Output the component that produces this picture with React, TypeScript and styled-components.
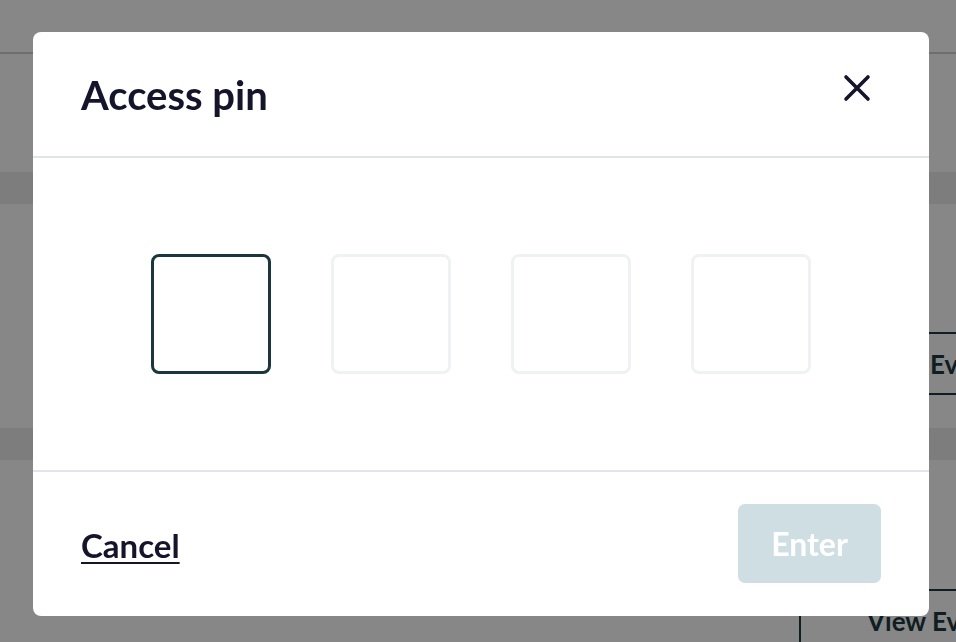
import React from "react";
import styled, { createGlobalStyle } from "styled-components";

const Global = createGlobalStyle`
  html, body { margin: 0; padding: 0; }
  body {
    width: 956px;
    height: 642px;
    overflow: hidden;
    background: #ffffff;
    font-family: Lato, "Noto Sans", sans-serif;
  }
`;

const Page = styled.div`
  width: 956px;
  height: 642px;
  overflow: hidden;
  background: #ffffff;
  display: flex;
  flex-direction: column;
`;

const TopBar = styled.div`
  height: 52px;
  flex: none;
  border-bottom: 2px solid #d0d0d0;
`;

const Spacer = styled.div<{ $h: number }>`
  height: ${(p) => p.$h}px;
  flex: none;
`;

const Band = styled.div`
  height: 32px;
  flex: none;
  background: #ececec;
`;

const EventRow = styled.div<{ $pad: number; $h: number }>`
  height: ${(p) => p.$h}px;
  flex: none;
  display: grid;
  grid-template-columns: 799px auto;
  align-items: start;
  padding-top: ${(p) => p.$pad}px;
  box-sizing: border-box;
`;

const GhostButton = styled.div<{ $left?: boolean }>`
  grid-column: 2;
  height: 63px;
  box-sizing: border-box;
  border-top: 2px solid #1b3a40;
  border-bottom: 2px solid #1b3a40;
  border-left: ${(p) => (p.$left ? "2px solid #1b3a40" : "none")};
  display: flex;
  align-items: center;
  padding-left: 66px;
  white-space: nowrap;
  font-size: 26px;
  font-weight: 700;
  color: #1b3a40;
`;

const Overlay = styled.div`
  position: fixed;
  inset: 0;
  background: rgba(0, 0, 0, 0.47);
  display: flex;
  align-items: flex-start;
  justify-content: flex-start;
  padding: 32px 0 0 33px;
  box-sizing: border-box;
`;

const Modal = styled.div`
  width: 896px;
  height: 584px;
  background: #ffffff;
  border-radius: 8px;
  display: flex;
  flex-direction: column;
  overflow: hidden;
`;

const Header = styled.div`
  height: 124px;
  flex: none;
  display: flex;
  align-items: center;
  justify-content: space-between;
  padding: 0 48px;
  border-bottom: 2px solid #e3e3eb;
  box-sizing: content-box;
`;

const Title = styled.h2`
  margin: 0;
  font-family: Lato, "Noto Sans", sans-serif;
  font-weight: 700;
  font-size: 40px;
  line-height: 1;
  color: #14142b;
  padding-top: 2px;
`;

const CloseButton = styled.button`
  border: none;
  background: none;
  padding: 0;
  width: 32px;
  height: 32px;
  display: flex;
  align-items: center;
  justify-content: center;
  margin-right: 8px;
  margin-top: -12px;
  cursor: pointer;
  color: #14142b;
`;

const Body = styled.div`
  height: 312px;
  flex: none;
  display: flex;
  align-items: center;
  justify-content: center;
  gap: 60px;
  border-bottom: 2px solid #e3e3eb;
  box-sizing: content-box;
`;

const PinBox = styled.div<{ $active?: boolean }>`
  width: 120px;
  height: 120px;
  box-sizing: border-box;
  border-radius: 8px;
  border: 3px solid ${(p) => (p.$active ? "#1b363d" : "#f0f1f3")};
  background: #ffffff;
`;

const Footer = styled.div`
  flex: 1;
  display: flex;
  align-items: center;
  justify-content: space-between;
  padding: 0 48px;
`;

const CancelLink = styled.a`
  font-family: Lato, "Noto Sans", sans-serif;
  font-weight: 700;
  font-size: 33px;
  color: #14142b;
  text-decoration: underline;
  text-decoration-thickness: 2px;
  text-underline-offset: 4px;
  cursor: pointer;
  padding-top: 2px;
`;

const EnterButton = styled.button`
  width: 143px;
  height: 79px;
  border: none;
  border-radius: 7px;
  background: #cfdee2;
  color: #ffffff;
  font-family: Lato, "Noto Sans", sans-serif;
  font-weight: 700;
  font-size: 32px;
  padding: 0;
  margin-top: -1px;
`;

export default function App() {
  return (
    <>
      <Global />
      <Page>
        <TopBar />
        <Spacer $h={118} />
        <Band />
        <EventRow $pad={128} $h={224}>
          <GhostButton>View Events</GhostButton>
        </EventRow>
        <Band />
        <EventRow $pad={129} $h={200}>
          <GhostButton $left>View Events</GhostButton>
        </EventRow>
      </Page>
      <Overlay>
        <Modal role="dialog" aria-label="Access pin">
          <Header>
            <Title>Access pin</Title>
            <CloseButton aria-label="Close">
              <svg width="28" height="28" viewBox="0 0 28 28" fill="none">
                <path
                  d="M3 3 L25 25 M25 3 L3 25"
                  stroke="currentColor"
                  strokeWidth="3.6"
                  strokeLinecap="round"
                />
              </svg>
            </CloseButton>
          </Header>
          <Body>
            <PinBox $active />
            <PinBox />
            <PinBox />
            <PinBox />
          </Body>
          <Footer>
            <CancelLink>Cancel</CancelLink>
            <EnterButton disabled>Enter</EnterButton>
          </Footer>
        </Modal>
      </Overlay>
    </>
  );
}
